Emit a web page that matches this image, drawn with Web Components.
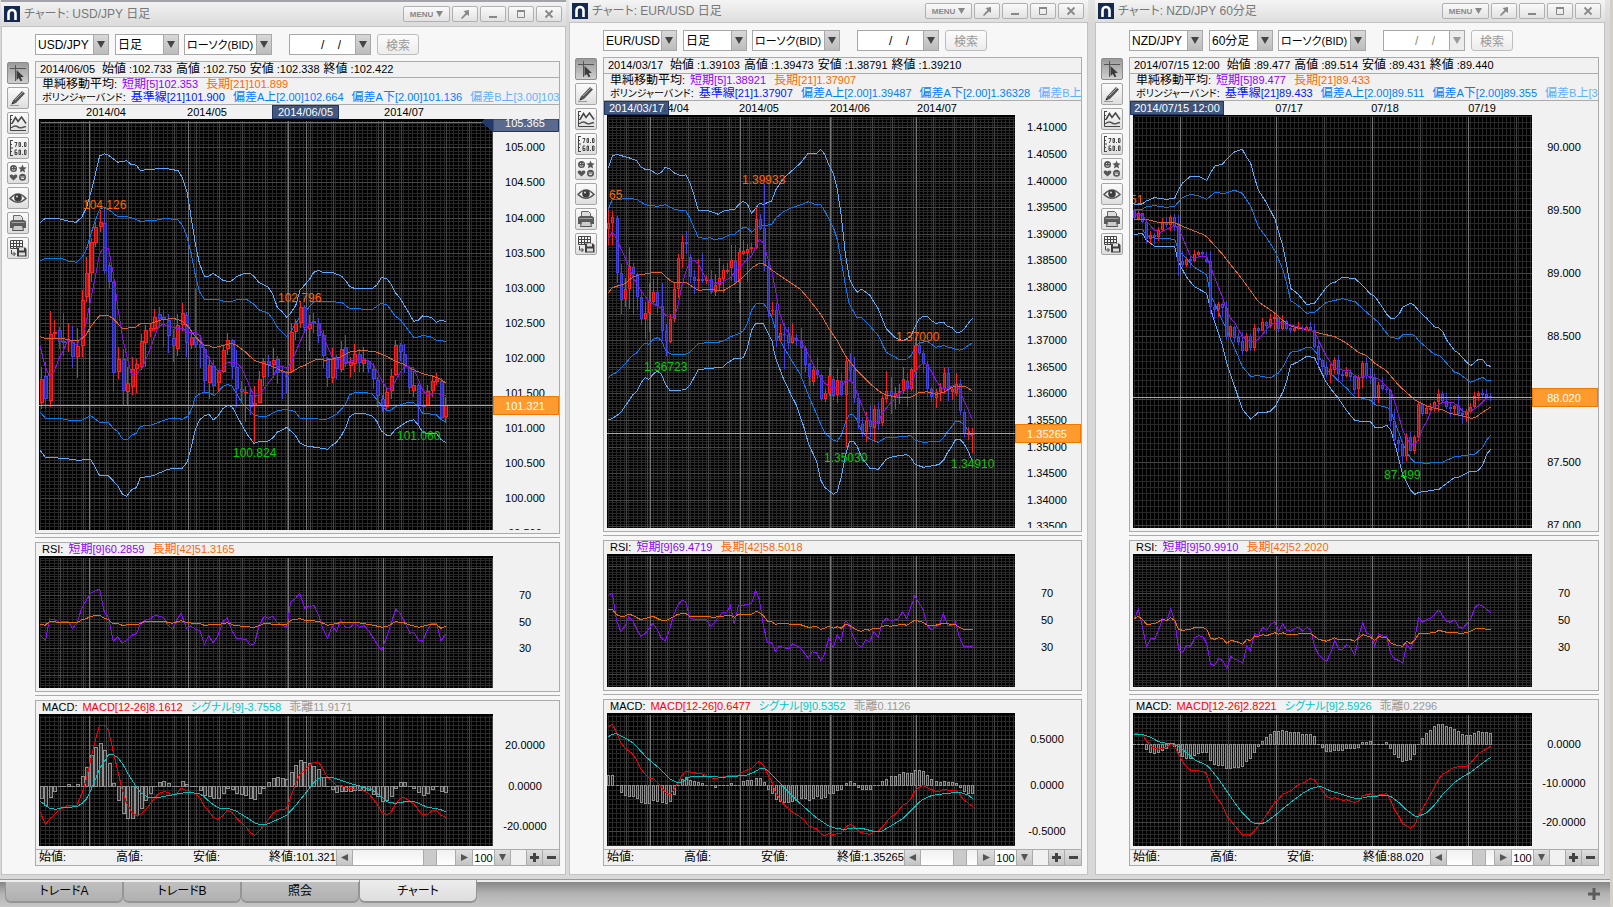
<!DOCTYPE html>
<html lang="ja">
<head>
<meta charset="utf-8">
<title>チャート</title>
<style>
html,body{margin:0;height:100%}
body{font-family:"Liberation Sans","Noto Sans CJK JP",sans-serif;font-size:12px;background:#d4d0c8;color:#000}
</style>
</head>
<body>
<trade-desk></trade-desk>
<script>
/* Series are stored in fine plot units; each chart's s/o pairs turn them into pixels. */
const P = s => s.trim().split(/\s+/).map(p => p.split(',').map(Number));
const CHARTS = {
usd: {
  pair:'USD/JPY', span:'日足', date:'2014/06/05', ohlc:['102.733','102.750','102.338','102.422'],
  ma:['102.353','101.899'], bb:['101.900','102.664','101.136','103.578'], last:'101.321', scroll:80,
  pitch:4.54, body:4, vmid:[88,65.9], vmaj:[170,460,750,1026], cross:800, sx:2.9037,
  dates:[[67,'2014/04'],[168,'2014/05'],[267,'2014/06'],[365,'2014/07']], mark:[233,67],
  main:{ox:-9,oy:-9,y0:112,step:105.3,labels:['105.000','104.500','104.000','103.500','103.000','102.500','102.000','101.500','101.000','100.500','100.000','99.500'],
    hline:886, top:'105.365', x0:31,dx:13.2,
    notes:[[154,297,'104.126','h'],[719,576,'102.796','h'],[588,1041,'100.824','l'],[1066,990,'101.060','l']],
    candles:`r772,808,878,898 b757,799,866,898 r603,672,872,892 r630,666,671,687 b652,659,696,718 b610,692,698,738 r640,692,696,726 b648,695,740,773 r655,708,740,805 r540,571,707,740 r441,490,562,577 r385,397,490,517 r336,352,398,412 r300,336,350,365 b293,340,482,492 b455,465,517,535 b512,516,790,842 r711,748,785,806 b718,748,842,886 r772,820,845,887 r742,778,832,855 r748,762,776,850 r672,693,770,780 r646,660,700,772 r640,654,662,680 r597,622,656,662 b592,613,626,655 b600,622,630,710 b612,630,677,728 b656,685,707,755 r612,645,718,738 r580,609,646,662 b605,615,700,740 r668,682,704,718 b534,682,704,714 b675,703,715,775 b710,716,814,848 r740,765,818,866 b750,767,827,858 r780,787,820,842 r704,720,786,790 r670,690,716,736 b686,690,772,808 b720,772,836,890 b813,836,846,878 r828,846,850,935 b830,855,890,916 r828,880,889,996 r783,808,880,880 r745,754,800,828 b736,752,764,802 r714,750,766,804 b738,748,788,822 b770,782,790,866 b782,794,800,852 r640,667,787,790 r628,640,667,690 r572,592,638,655 b586,592,655,668 r615,642,658,722 b610,632,638,668 b624,638,677,700 b660,676,737,775 b742,745,805,830 r714,748,805,818 b736,748,778,806 r694,717,780,786 b675,711,760,770 r740,757,767,800 r702,732,762,786 b718,732,758,786 r710,750,762,786 b750,754,776,790 b758,776,806,838 b800,810,857,890 b855,866,890,905 r833,847,890,898 r777,797,843,868 r690,706,796,798 b700,706,727,753 b702,732,768,790 b768,770,835,852 r783,826,843,862 b820,824,884,945 b872,885,890,908 r826,843,886,888 r796,814,842,860 r790,808,816,824 b804,814,924,928 r862,886,920,938`,
    lines:[
    ['#5cabfb','29,338 44,325 84,326 105,332 134,337 150,322 165,290 176,250 190,192 202,138 216,131 228,136 255,157 281,152 293,163 309,166 320,181 364,177 400,176 430,182 442,202 456,245 466,310 480,400 492,460 506,498 520,498 532,490 546,500 562,512 582,515 600,500 620,491 640,491 652,500 664,517 692,532 705,553 718,592 732,605 745,622 758,608 772,585 784,541 810,510 824,487 838,481 850,487 880,488 905,499 918,514 928,529 944,536 994,535 1008,525 1020,502 1036,506 1048,522 1060,547 1076,567 1095,600 1114,634 1128,630 1140,618 1165,622 1180,637 1193,631 1207,634'],
    ['#0a78ee','29,452 44,446 97,447 110,453 136,457 152,440 164,418 176,375 190,330 202,298 216,292 230,300 255,320 281,320 300,325 320,334 364,331 395,325 430,330 442,345 456,380 468,430 480,495 492,545 506,568 546,568 560,573 585,575 600,569 630,569 650,583 664,599 692,610 706,628 720,655 745,680 758,665 772,640 784,620 800,604 824,575 850,574 905,577 928,596 994,598 1020,580 1038,586 1060,618 1076,630 1114,682 1128,681 1140,676 1165,681 1180,691 1207,694'],
    ['#0a78ee','29,905 44,924 97,927 120,932 150,931 176,917 202,937 228,938 242,955 255,965 268,986 281,990 296,975 309,970 320,949 352,945 400,927 420,924 442,928 460,918 470,895 480,862 495,850 520,846 534,858 560,830 573,823 586,828 600,850 615,878 635,900 650,914 664,919 690,918 718,902 745,898 770,905 784,925 860,928 890,913 915,885 928,855 944,847 970,847 994,852 1008,870 1022,888 1036,901 1048,901 1062,889 1095,878 1114,878 1128,890 1140,910 1180,914 1193,928 1207,936'],
    ['#5cabfb','29,1020 44,1042 97,1045 140,1051 176,1048 190,1073 202,1097 228,1098 242,1113 255,1127 268,1152 281,1159 296,1138 309,1133 320,1103 358,1097 400,1078 420,1075 440,1077 456,1057 466,1020 480,960 492,930 506,918 520,912 532,930 546,918 560,896 573,886 586,889 600,915 615,945 630,972 650,1000 664,995 692,993 706,983 718,966 732,960 745,952 770,975 784,1000 800,1007 864,1018 878,1005 890,997 905,975 918,950 928,920 944,910 970,910 994,918 1008,935 1020,962 1036,976 1048,975 1062,958 1095,935 1114,929 1128,945 1140,967 1160,972 1180,970 1193,988 1207,998'],
    ['#e0602c','29,680 44,685 97,686 130,693 145,690 163,675 176,650 202,617 228,617 242,626 268,655 305,653 320,641 352,640 380,630 415,625 440,632 460,650 480,680 506,708 520,707 534,713 585,700 600,706 625,725 650,750 664,756 690,764 718,776 745,788 760,786 784,771 800,765 825,751 838,748 860,751 900,741 930,726 965,721 1005,726 1035,739 1060,753 1090,765 1115,780 1140,791 1170,799 1185,804 1207,818'],
    ['#8c10e0','29,706 44,770 57,801 70,785 84,746 97,720 110,690 120,695 135,705 150,680 163,640 176,570 190,500 202,430 216,412 228,416 242,490 256,600 270,690 284,750 295,795 309,792 325,775 340,740 358,690 372,652 385,643 400,648 430,656 442,654 456,667 483,668 495,680 506,720 520,745 534,770 546,782 556,783 572,758 600,758 615,775 630,810 645,845 655,858 668,852 692,820 706,800 720,768 732,768 745,774 758,760 772,725 784,695 800,660 812,640 824,633 838,645 850,675 864,710 878,742 892,744 918,762 930,752 960,745 975,750 994,762 1008,783 1020,810 1036,835 1048,836 1060,815 1076,785 1090,768 1114,774 1128,810 1140,840 1155,856 1180,850 1207,857']]},
  rsi:{ox:-9,oy:-26,y0:195,step:79.7,labels:['70','50','30'],vals:['60.2859','51.3165'],lines:[
    ['#8c08ff','29,316 45,331 57,267 70,268 84,277 110,273 123,296 137,277 150,235 163,212 176,190 190,182 202,178 216,247 228,262 242,334 255,320 268,340 281,331 295,316 309,311 322,278 334,271 348,268 362,256 388,262 400,285 414,299 426,270 439,250 454,295 466,288 480,297 494,303 506,343 519,318 532,338 546,316 560,275 573,263 586,302 600,325 627,328 639,346 652,341 664,290 680,259 692,265 706,259 718,278 745,292 757,217 770,206 783,190 798,234 812,229 825,227 838,255 850,294 864,325 877,290 890,303 902,271 916,292 930,292 942,278 957,292 970,287 983,301 1008,343 1021,362 1036,320 1048,282 1062,238 1075,250 1090,280 1103,310 1114,306 1128,330 1140,334 1154,300 1167,279 1180,279 1193,333 1207,313'],
    ['#f06800','29,283 44,286 57,274 84,277 125,279 137,278 150,269 163,266 176,259 202,256 216,265 228,268 242,282 255,281 268,286 318,282 334,274 388,274 412,280 439,272 456,278 494,281 506,286 530,284 546,284 573,278 590,285 625,290 652,292 680,281 745,284 757,271 783,266 800,271 838,274 864,286 900,278 930,279 945,277 990,284 1022,292 1036,290 1062,275 1085,278 1105,286 1130,292 1160,284 1180,283 1193,295 1207,289']]},
  macd:{ox:-9,oy:-184,y0:646,step:121.5,base:768,labels:['20.0000','0.0000','-20.0000'],vals:['8.1612','-3.7558','11.9171'],x0:31,dx:13.2,lines:[
    ['#f00000','29,846 45,883 60,864 84,840 108,827 135,828 150,792 163,750 176,690 190,630 202,586 216,586 228,600 242,665 255,724 268,780 281,822 296,847 311,859 325,850 342,832 362,804 375,790 388,785 400,787 415,795 428,789 439,774 452,781 466,786 480,790 494,804 506,828 519,843 532,861 546,868 560,857 573,840 586,847 600,865 627,890 639,907 652,916 668,900 692,869 706,850 718,841 745,836 757,800 770,765 783,734 798,721 812,706 825,697 838,697 850,716 864,743 877,752 890,766 905,767 926,776 963,779 983,790 1008,822 1021,846 1036,854 1048,847 1062,822 1076,804 1088,803 1115,822 1128,840 1140,854 1155,853 1167,842 1180,840 1193,856 1207,862'],
    ['#00c0c0','29,813 44,825 57,835 75,838 95,833 135,830 150,821 163,808 176,782 190,748 202,715 216,695 228,674 242,674 255,683 268,700 281,725 296,750 309,771 322,788 340,801 364,804 400,797 439,790 460,787 492,791 506,800 519,813 532,824 550,835 580,837 600,844 627,861 652,878 664,883 690,882 718,869 745,856 770,828 800,790 825,757 838,746 850,742 877,742 905,752 935,762 965,770 994,780 1022,802 1040,817 1062,820 1090,815 1115,815 1128,820 1154,832 1190,838 1207,845']]}
},
eur: {
  pair:'EUR/USD', span:'日足', date:'2014/03/17', ohlc:['1.39103','1.39473','1.38791','1.39210'],
  ma:['1.38921','1.37907'], bb:['1.37907','1.39487','1.36328','1.40277'], last:'1.35265', scroll:75,
  pitch:4.09, body:3, vmid:[79,61.35], vmaj:[151,421,691,949], sx:3,
  dates:[[62,'2014/04'],[152,'2014/05'],[243,'2014/06'],[330,'2014/07']], mark:[-3,65],
  main:{ox:-7,oy:-5,y0:52,step:79.8,labels:['1.41000','1.40500','1.40000','1.39500','1.39000','1.38500','1.38000','1.37500','1.37000','1.36500','1.36000','1.35500','1.35000','1.34500','1.34000','1.33500'],
    hline:970, x0:25,dx:12.27,
    notes:[[28,267,'65','h'],[425,222,'1.39933','h'],[132,783,'1.36723','l'],[889,693,'1.37000','h'],[671,1056,'1.35030','l'],[1052,1074,'1.34910','l']],
    candles:`r297,340,358,406 r303,321,340,406 b318,324,488,518 b462,490,571,613 r505,538,568,592 r410,468,536,598 b458,470,492,616 b488,492,562,600 b540,562,626,646 r577,610,628,686 r520,577,610,665 r507,546,577,582 b500,546,588,608 b520,588,664,692 b643,664,693,738 r613,628,695,700 r515,538,628,635 r433,445,538,565 r375,395,447,475 b363,397,401,433 b433,441,502,518 b480,502,512,551 r448,508,512,543 b428,508,512,520 r495,508,512,522 b480,508,545,552 r493,526,545,557 r445,505,526,542 r465,480,508,550 r458,480,485,492 r405,451,473,512 b405,453,515,520 r413,426,517,580 r390,424,431,434 r402,418,428,515 r398,410,418,430 r292,328,415,418 b312,328,357,360 b222,355,468,482 b455,470,602,620 r575,600,604,615 b580,600,692,712 r643,670,692,697 b640,672,676,776 b652,676,700,718 r640,680,698,702 b672,684,692,708 b655,692,715,795 b708,714,766,785 b758,763,802,828 r765,780,815,828 b742,780,796,808 b792,796,868,872 r838,850,868,875 r772,798,850,857 b798,806,858,870 r778,810,856,880 b790,812,855,858 r742,754,856,1010 b730,754,784,812 b742,780,864,880 b850,864,940,957 b922,943,968,980 r905,934,966,995 b886,932,952,980 r886,898,955,995 b875,898,942,960 r855,865,940,948 r784,842,868,880 b800,842,858,912 r832,850,864,896 r822,842,850,882 r770,808,843,852 b788,814,836,892 r773,778,838,842 r697,706,785,790 b693,706,730,735 b720,730,762,790 b752,762,838,860 b832,838,862,877 r838,846,865,893 r820,830,846,872 r773,788,838,852 b770,788,840,872 r833,838,845,870 r790,822,848,858 b808,822,902,915 b897,906,973,980 r950,970,976,990 r955,970,974,1028`,
    lines:[
    ['#5cabfb','25,175 37,138 49,133 86,143 110,152 122,170 135,178 147,178 172,193 184,187 196,172 209,177 221,188 245,198 257,194 270,220 282,255 295,301 307,303 319,301 331,304 355,313 368,304 392,299 404,298 416,284 430,274 442,282 455,310 467,295 478,280 490,283 515,273 527,240 552,203 576,182 601,160 625,130 650,130 662,118 674,133 686,163 700,190 712,238 724,318 736,430 748,505 760,530 772,547 784,537 809,555 835,597 859,657 884,682 908,693 932,680 944,653 956,628 968,620 982,619 995,632 1007,640 1031,637 1043,650 1055,652 1067,666 1079,667 1091,659 1104,642 1117,625'],
    ['#0a78ee','25,298 37,268 60,268 80,265 110,268 135,284 172,289 197,284 221,297 245,303 257,301 270,325 295,383 319,385 331,383 344,389 368,384 392,373 404,372 430,352 442,354 455,366 478,347 515,344 527,325 552,304 576,293 601,285 625,275 650,285 662,284 674,303 700,352 712,388 724,453 736,525 748,582 772,624 784,622 809,647 835,677 859,727 884,741 896,748 920,747 932,738 944,718 956,700 982,693 1007,712 1031,707 1079,721 1091,716 1117,698'],
    ['#0a78ee','25,802 37,793 49,788 74,763 98,735 110,729 122,712 135,700 147,703 160,688 172,683 184,690 196,720 209,731 221,734 257,733 270,726 295,701 319,698 355,697 368,694 392,680 416,671 430,663 442,640 455,600 467,582 490,580 502,595 515,620 527,660 539,690 564,733 601,793 625,855 650,913 662,943 674,968 700,991 712,994 724,975 736,938 748,913 760,915 772,930 784,962 797,978 809,987 835,997 859,982 884,982 932,977 944,990 968,997 1019,994 1031,982 1043,965 1055,950 1067,934 1079,934 1091,943 1104,960 1117,980'],
    ['#5cabfb','25,929 37,926 62,908 98,855 110,845 122,820 135,803 147,808 160,792 172,783 184,792 196,822 209,841 245,840 257,838 270,825 295,779 331,775 368,772 380,760 404,745 420,747 430,742 442,715 455,660 467,640 490,640 502,665 515,690 527,745 552,810 576,860 589,885 601,920 613,955 625,1000 650,1055 662,1110 674,1132 700,1153 712,1145 724,1100 736,1040 748,995 760,994 772,1010 784,1040 797,1058 809,1075 835,1078 859,1048 871,1042 896,1037 920,1034 932,1042 944,1062 956,1067 970,1072 1007,1066 1019,1062 1031,1050 1043,1027 1055,1010 1067,988 1079,988 1091,1000 1104,1022 1117,1055'],
    ['#e0602c','25,548 37,533 74,521 98,502 122,493 147,491 160,487 184,487 209,511 221,517 257,517 295,541 331,538 368,543 404,522 430,501 455,474 478,460 490,460 515,480 552,505 601,538 625,565 662,613 686,655 712,692 736,737 772,783 809,820 835,842 859,856 896,862 932,862 956,848 982,845 1007,853 1031,847 1055,832 1079,828 1098,831 1117,842'],
    ['#8c10e0','25,386 37,365 49,385 74,440 98,500 122,540 147,575 184,594 196,615 221,625 233,590 245,530 257,485 270,456 282,451 295,461 307,485 319,508 344,520 368,516 392,502 404,487 416,475 442,448 455,438 467,410 478,388 490,398 502,440 515,480 527,545 539,610 552,648 576,683 601,692 625,733 650,785 674,820 698,835 724,832 736,812 748,810 760,822 772,850 785,885 797,915 809,935 821,938 835,937 847,910 871,880 884,868 908,840 932,828 944,795 956,770 970,759 982,763 995,785 1007,810 1025,834 1043,835 1055,828 1067,827 1079,840 1091,870 1104,898 1117,930']]},
  rsi:{ox:-17,oy:-24,y0:190,step:81,labels:['70','50','30'],vals:['69.4719','58.5018'],lines:[
    ['#8c08ff','54,196 67,190 80,273 92,304 104,290 116,262 128,272 140,297 152,319 165,311 189,280 201,298 214,324 226,333 240,294 251,255 263,226 275,211 287,215 299,264 311,268 350,268 361,290 373,278 385,263 397,247 410,247 421,227 433,282 445,227 460,226 485,220 497,181 508,208 520,285 532,338 545,338 556,364 568,349 596,357 608,341 632,355 655,385 667,365 680,369 692,392 703,374 716,325 730,352 742,314 754,333 766,271 778,284 790,320 802,343 815,352 827,330 839,335 851,305 865,322 877,277 889,265 902,273 926,266 938,244 950,266 962,232 974,198 986,218 1000,240 1012,288 1024,300 1048,284 1060,250 1072,286 1084,286 1096,275 1108,320 1120,348 1148,349'],
    ['#f06800','54,238 67,238 80,254 92,259 104,259 116,253 128,256 152,269 189,259 214,271 226,273 240,266 263,253 287,250 299,259 350,259 370,262 421,256 433,262 445,253 485,253 497,245 508,247 520,257 532,273 545,275 556,283 568,281 596,282 632,284 655,292 680,290 692,298 703,295 716,289 730,295 742,290 754,295 766,283 778,286 802,301 815,304 827,298 839,301 851,295 865,297 877,289 889,287 902,289 938,283 950,286 962,278 974,271 1000,277 1012,286 1036,286 1060,280 1096,284 1108,292 1120,298 1148,298']]},
  macd:{ox:-17,oy:-183,y0:628,step:138,base:766,labels:['0.5000','0.0000','-0.5000'],vals:['0.6477','0.5352','0.1126'],x0:55,dx:12.27,lines:[
    ['#f00000','54,590 67,583 80,608 92,637 104,653 128,672 140,690 152,715 165,732 177,744 189,745 201,756 214,770 226,787 240,794 251,780 263,760 275,738 287,724 311,728 340,733 361,742 373,746 397,742 421,735 445,737 456,727 485,715 497,702 508,694 520,705 532,730 545,755 556,785 568,805 580,822 606,845 632,862 643,870 655,887 680,897 692,912 703,917 716,911 730,916 742,910 754,910 766,893 780,882 790,887 802,900 815,908 839,913 851,905 865,903 877,892 900,863 914,855 938,826 950,820 962,807 974,784 986,773 1000,766 1012,773 1036,784 1048,784 1060,778 1072,780 1096,780 1108,790 1120,808 1148,830'],
    ['#00c0c0','54,621 67,613 80,611 104,623 128,638 152,663 165,678 189,699 214,720 240,748 263,758 275,756 299,741 340,738 397,742 445,738 470,735 490,728 508,717 520,715 532,720 556,745 580,770 606,797 632,822 655,842 680,864 716,888 742,896 766,898 790,894 815,895 851,904 877,903 902,888 938,866 962,843 986,818 1000,808 1024,797 1048,793 1072,790 1108,787 1120,790 1135,795 1148,806']]}
},
nzd: {
  pair:'NZD/JPY', span:'60分足', date:'2014/07/15 12:00', ohlc:['89.477','89.514','89.431','89.440'],
  ma:['89.477','89.433'], bb:['89.433','89.511','89.355','89.550'], last:'88.020', scroll:77, off:true,
  pitch:4, body:3, vmid:[22,144], vmaj:[166,454,742,1030], sx:3,
  dates:[[60,'07/16'],[156,'07/17'],[252,'07/18'],[349,'07/19']], mark:[-3,94],
  main:{ox:-8,oy:-5,y0:112,step:188.8,labels:['90.000','89.500','89.000','88.500','88.000','87.500','87.000'],
    hline:862, x0:28,dx:12,
    notes:[[16,282,'51','h'],[776,1106,'87.499','l']],
    candles:`b298,300,325,327 r303,310,327,330 b308,310,337,340 b333,337,388,402 r362,375,388,400 b368,375,382,402 r352,361,380,392 r325,340,361,366 b322,340,346,350 r316,320,346,364 b312,320,349,362 b315,349,452,497 b424,452,465,470 r442,448,465,470 b440,448,452,475 r420,433,452,455 r423,427,434,440 b423,427,432,440 b425,447,455,460 b424,454,590,613 b575,590,599,628 r575,583,600,620 b580,583,594,622 b574,595,680,690 r645,648,680,685 b648,650,683,695 b668,682,695,706 b665,693,724,735 r670,678,724,726 b672,678,713,724 r643,655,713,722 b650,654,662,668 r624,637,662,664 b632,637,648,672 r612,627,647,655 r613,621,627,660 b618,621,656,666 r615,632,656,660 b630,633,656,660 b650,655,660,670 r650,655,664,666 r635,650,656,660 b645,653,658,664 r646,652,661,664 b637,652,660,664 b643,659,710,714 b692,708,751,768 b747,751,771,784 b755,771,795,800 r762,778,795,818 r742,750,780,792 b735,750,793,812 b782,793,797,815 r770,785,797,800 b778,786,800,812 b795,799,839,852 r795,805,838,862 r752,760,803,834 b740,760,799,806 b775,799,804,822 b793,803,864,880 r815,825,864,878 b800,825,838,844 b828,836,841,850 b838,841,934,950 b897,934,990,998 b980,990,1003,1026 b997,1003,1038,1062 r970,981,1038,1052 b966,981,1022,1022 r975,980,1022,1031 r875,881,981,993 b878,881,911,918 r888,893,911,912 r879,893,899,910 r873,877,897,905 r838,853,877,905 b843,852,872,877 b850,872,892,897 b880,891,897,920 r885,889,897,912 b855,888,912,918 b893,910,916,942 r897,905,916,936 r878,891,905,910 r847,858,891,895 r843,850,859,872 b838,850,854,864 b838,852,861,866 b850,858,863,872`,
    lines:[
    ['#5cabfb','28,283 52,282 64,273 88,263 125,268 149,265 160,240 172,220 196,199 222,199 233,205 245,211 257,188 270,168 292,163 310,143 329,125 352,118 364,140 377,160 389,205 400,240 425,280 450,328 462,370 474,410 486,470 497,535 520,553 545,584 569,579 604,532 617,520 630,517 652,502 690,506 712,525 737,553 750,560 773,593 785,613 797,625 809,625 822,613 833,592 857,580 870,588 882,604 905,625 928,650 942,654 953,665 965,690 989,722 1001,730 1025,757 1037,767 1061,747 1073,748 1085,766 1097,769'],
    ['#0a78ee','28,298 52,298 64,290 88,287 125,292 149,289 172,263 196,253 222,258 245,268 270,247 280,247 292,252 329,241 352,250 377,288 400,350 425,383 450,423 474,480 486,525 497,572 520,587 545,610 569,607 604,577 652,566 690,575 725,607 760,637 785,670 797,683 822,685 833,674 857,672 870,678 882,693 928,733 945,737 989,787 1001,790 1037,817 1073,802 1085,811 1097,811'],
    ['#0a78ee','28,358 52,358 64,375 76,383 125,386 149,388 160,420 184,445 208,472 233,487 245,495 257,555 270,583 292,632 310,670 329,715 352,770 377,799 400,797 413,800 437,803 460,790 474,770 497,727 520,723 545,712 560,713 580,735 604,778 640,812 665,835 690,861 712,865 737,871 750,884 785,892 797,900 809,935 833,1000 845,1025 857,1045 870,1057 905,1060 953,1056 989,1040 1050,1033 1073,1012 1085,990 1097,975'],
    ['#5cabfb','28,374 52,370 64,390 88,408 149,411 160,455 184,500 208,530 245,550 257,598 270,640 292,705 305,760 329,830 352,897 377,928 400,907 425,907 437,903 450,890 474,845 486,810 497,766 520,755 545,739 569,743 580,768 604,817 620,840 640,865 665,902 690,932 737,936 750,952 773,952 785,946 797,960 809,1000 822,1050 833,1095 857,1140 870,1153 882,1147 942,1138 965,1120 989,1102 1001,1102 1037,1084 1050,1086 1061,1080 1073,1065 1085,1033 1097,1018'],
    ['#e0602c','28,328 64,328 100,337 149,338 172,349 233,373 245,380 292,432 310,455 352,508 400,575 450,610 474,632 497,648 545,659 590,671 630,680 665,700 700,727 725,737 750,760 785,783 822,827 870,870 905,888 953,900 975,910 1013,918 1037,925 1050,923 1073,907 1097,891'],
    ['#8c10e0','28,313 52,313 64,333 88,360 105,367 125,358 149,347 160,355 172,380 184,410 196,437 208,447 222,440 233,440 245,440 257,470 270,505 292,560 305,605 317,625 329,638 341,660 352,680 365,688 377,695 389,694 400,688 413,672 437,643 462,637 497,645 545,658 569,665 580,690 604,738 617,758 630,775 652,780 675,782 690,797 700,805 712,800 725,797 750,803 762,808 797,843 809,875 822,920 833,962 845,985 857,1003 870,1003 882,985 893,955 905,935 917,905 929,890 953,877 985,878 1001,890 1013,905 1037,904 1061,888 1085,863 1097,862']]},
  rsi:{ox:-13,oy:-24,y0:190,step:81,labels:['70','50','30'],vals:['50.9910','52.2020'],lines:[
    ['#8c08ff','43,268 55,238 67,290 80,350 92,325 104,328 116,298 128,266 140,273 152,236 164,274 176,358 188,367 200,346 212,349 225,322 236,317 249,320 260,341 272,403 284,406 296,385 308,392 320,416 332,379 344,388 356,392 368,400 380,349 391,362 404,311 416,314 428,292 440,301 452,283 464,275 476,304 488,281 500,301 512,304 524,295 536,292 548,304 560,292 572,299 584,350 596,375 608,386 620,394 632,368 644,331 656,358 668,358 680,344 692,352 704,377 716,320 728,278 740,310 752,314 764,349 776,311 788,318 800,320 812,370 824,388 836,391 848,400 860,343 872,358 884,326 896,263 908,277 920,268 932,265 944,254 956,238 968,258 980,274 992,277 1004,268 1016,292 1028,295 1052,268 1064,233 1076,223 1088,229 1100,238 1112,247'],
    ['#f06800','43,266 55,259 67,268 80,283 104,281 128,268 140,272 152,263 164,272 176,298 188,301 212,298 225,292 249,292 260,298 272,325 284,328 296,323 308,326 320,340 332,331 356,337 368,343 380,328 391,332 404,318 416,319 428,314 440,317 464,308 476,313 488,308 500,313 572,311 596,328 620,334 644,323 656,330 692,329 704,334 728,314 752,322 764,331 776,320 800,323 812,338 824,344 848,349 860,334 872,341 884,331 896,311 944,308 956,301 980,307 1028,310 1052,304 1064,297 1080,295 1112,299']]},
  macd:{ox:-13,oy:-183,y0:642,step:117.5,base:642,labels:['0.0000','-10.0000','-20.0000'],vals:['2.8221','2.5926','0.2296'],x0:43,dx:12,lines:[
    ['#f00000','43,611 67,613 80,633 92,647 104,655 116,658 140,652 152,643 164,648 176,675 188,695 200,711 212,721 249,724 260,731 272,768 284,793 308,828 320,857 344,887 368,916 380,913 391,916 404,902 428,870 440,853 464,818 476,808 488,793 512,783 536,763 548,760 560,752 572,745 584,750 596,768 620,799 632,805 644,803 668,811 680,809 704,818 716,813 728,797 752,791 764,797 800,791 812,812 824,840 836,858 848,882 860,887 872,895 884,885 896,855 920,815 944,770 956,748 968,733 980,727 992,718 1004,712 1040,708 1052,700 1064,685 1076,670 1100,656 1112,649'],
    ['#00c0c0','43,613 67,613 92,622 116,635 140,640 164,642 188,658 225,690 260,706 272,718 296,748 320,783 344,818 368,850 391,873 404,880 428,880 440,875 464,857 488,836 524,808 548,790 572,776 600,769 632,783 656,790 680,798 704,805 728,804 752,799 800,797 812,799 836,817 860,840 884,858 896,859 920,848 944,824 968,793 1004,757 1028,740 1052,727 1076,708 1112,682']]}
}};

/* Wraps kanji and kana runs so that they can take their own size beside the digits. */
const mix = s => s.replace(/[\u4e00-\u9fff]+|[\u3040-\u30ff]+/g,
  r => `<span class="${/[\u4e00-\u9fff]/.test(r) ? 'kj' : 'kn'}">${r}</span>`);
const MIXCSS = `.kj{font-size:12px}.kn{font-size:11px;font-feature-settings:"palt"}`;
const at = (pts, x) => {
  for (let i = 1; i < pts.length; i++) if (x <= pts[i][0]) {
    const [a, b] = [pts[i-1], pts[i]];
    return a[1] + (b[1]-a[1]) * (x-a[0]) / (b[0]-a[0]);
  }
  return pts[pts.length-1][1];
};

/* One black plot with its value axis. */
class ChartPlot extends HTMLElement {
  constructor(){ super(); this.attachShadow({mode:'open'}); }
  connectedCallback(){
    const c = CHARTS[this.getAttribute('chart')], kind = this.getAttribute('kind'), d = c[kind];
    const X = x => x / c.sx + d.ox, Y = y => y / 3 + d.oy, R = Math.round;
    const W = 1600, H = 900;
    let minor = '', mid = '', maj = '', out = '';
    for (let i = 0; i * c.pitch < W; i++) minor += `M${R(1 + i*c.pitch)} 1V${H}`;
    for (let k = -90; k < 300; k++) {
      const y = R(Y(d.y0 + k * d.step / 10));
      if (y < 1 || y > H) continue;
      if (k % 10) minor += `M1 ${y}H${W}`; else mid += `M1 ${y}H${W}`;
    }
    const mx = x => R(x / c.sx + c.main.ox);
    for (let k = 0; k < 40; k++) mid += `M${mx(c.vmid[0] + k*c.vmid[1])} 1V${H}`;
    c.vmaj.forEach(x => maj += `M${mx(x)} 1V${H}`);
    if (c.cross) maj += `M${mx(c.cross)} 1V${H}`;
    if (d.top) maj += `M1 3H${W}`;
    out += `<g transform="translate(.5 .5)" fill="none"><path d="${minor}" stroke="#292929"/><path d="${mid}" stroke="#444"/><path d="${maj}" stroke="#757575"/></g>`;
    const lines = d.lines.map(([col, s]) => {
      const p = P(s).map(([x,y]) => X(x).toFixed(1) + ',' + Y(y).toFixed(1)).join(' ');
      return `<polyline points="${p}" stroke="${col}" fill="none"/>`;
    });
    if (d.base) {
      const a = P(d.lines[0][1]), b = P(d.lines[1][1]), y0 = R(Y(d.base));
      for (let i = 0; i < 90; i++) {
        const x = d.x0 + i*d.dx, h = R((at(a,x) - at(b,x)) / 3), px = R(X(x)) - 1;
        const w = c.body - 1;
        if (Math.abs(h) < 2) out += `<path d="M${px} ${y0+.5}h${w+1}" stroke="#909090"/>`;
        else out += `<rect x="${px+.5}" y="${Math.min(y0, y0+h)+.5}" width="${w}" height="${Math.abs(h)}" fill="#2c2c2c" stroke="#909090"/>`;
      }
    }
    if (kind === 'main') {
      out += lines.slice(0,4).join('');
      d.candles.trim().split(/\s+/).forEach((s, i) => {
        const [h,t,b,l] = s.slice(1).split(',').map(v => R(Y(+v))), x = R(X(d.x0 + i*d.dx));
        const [st, fi] = s[0] === 'r' ? ['#ff2020','#b41414'] : ['#4343e6','#2d2dae'];
        out += `<rect x="${x}" y="${h}" width="1" height="${Math.max(1,l-h)}" fill="${st}"/><rect x="${x-1}" y="${t}" width="${c.body}" height="${Math.max(1,b-t)}" fill="${st}"/>`;
        if (b - t > 2) out += `<rect x="${x}" y="${t+1}" width="${c.body-2}" height="${b-t-2}" fill="${fi}"/>`;
      });
      out += lines.slice(4).join('');
      out += `<path d="M0 ${R(Y(d.hline))+.5}H${W}" stroke="#ff9a1e"/>`;
      d.notes.forEach(([x,y,t,k]) => out += `<text x="${R(X(x))}" y="${R(Y(y))}" fill="${k==='h'?'#ff6600':'#00cc00'}">${t}</text>`);
    } else out += lines.join('');
    let ax = '';
    d.labels.forEach((t, i) => ax += `<text x="32" y="${R(Y(d.y0 + i*d.step)) + 4}">${t}</text>`);
    if (d.top) ax += `<path d="M0 0H65.5V12.5H0z" fill="#5a6a8c" stroke="#1f3763"/><text x="32" y="8" fill="#fff">${d.top}</text>`;
    if (d.hline) ax += `<rect x=".5" y="${R(Y(d.hline))-8.5}" width="65" height="18" fill="#ff9a2e" stroke="#f07a00"/><text x="32" y="${R(Y(d.hline))+5}" fill="#fff">${c.last}</text>`;
    this.shadowRoot.innerHTML = `<style>
      :host{display:flex;min-height:0;padding-left:3px}
      .plot{flex:1;min-width:0;height:100%;background:#000;shape-rendering:crispEdges;font-size:12px}
      .axis{width:66px;height:100%;flex:none;font-size:11px;text-anchor:middle}
    </style><svg class="plot" role="img" aria-label="${c.pair} ${kind}">${out}</svg><svg class="axis">${ax}</svg>`;
    if (d.top) {
      const s = this.shadowRoot.querySelector('.plot');
      s.insertAdjacentHTML('beforeend', `<svg x="100%" overflow="visible"><path d="M-12 3L-9 0H0V13z" fill="#223a68"/></svg>`);
    }
  }
}
customElements.define('chart-plot', ChartPlot);

const ICONS = {
  cursor:['十字カーソル','<path d="M3 6.500H19M8.500 3V19" stroke="#555" fill="none"/><path d="M9.500 8v10l2.300-2 1.700 3.300 1.900-.9-1.700-3.200 3.100-.4z" fill="#3c3c3c"/>'],
  pencil:['描画','<path d="M4.500 17.500l1.500-4L15 4l3 2.500-9 9.500z" fill="#555"/><path d="M8 13L16 5" stroke="#aaa"/><path d="M4.500 17.500l1-2.500 1.500 1.300z" fill="#222"/><path d="M3 18.500h9" stroke="#999"/>'],
  wave:['テクニカル','<path d="M3.500 3v15.500H19M3 3.500h3M3 7.500h2M3 11.500h2M3 15.500h2" stroke="#444" fill="none"/><path d="M5 11.500L8.500 5.500l2.500 4 3.500-4.500 4.500 6.500" stroke="#444" fill="none" stroke-width="1.500"/><path d="M5 15.500c3-3 5-1 7 0s4-.5 7-1" stroke="#555" fill="none" stroke-width="1.500"/>'],
  scale:['価格軸','<path d="M3.500 3v16M3 3.500h3M3 7.500h2M3 11h3M3 14.500h2M3 18.500h3" stroke="#444" fill="none"/><path d="M7.500 5.500h2.500L8.500 10M12 5.500h1.500v4h-1.500zM17.500 5.500h1.500v4h-1.500zM15 9.500h1M10 13H8v4.500h2v-2H8M12 13h1.500v4.500h-1.500zM17.500 13h1.500v4.500h-1.500zM15 17.500h1" stroke="#444" fill="none"/>'],
  marks:['マーク','<circle cx="6.500" cy="6.500" r="3.500" fill="#555"/><path d="M4.800 7.500q1.700 1.600 3.400 0M5 5.500h1M7.500 5.500h1" stroke="#ddd" fill="none"/><path d="M15.500 2.500l1.200 2.700 2.900.3-2.200 2 .7 3-2.600-1.600-2.600 1.600.7-3-2.200-2 2.900-.3z" fill="#555"/><path d="M6.500 18.500l-3.500-3.300q-1-2.700 1.300-2.700 1.500 0 2.200 1.200.7-1.200 2.200-1.200 2.300 0 1.300 2.700z" fill="#555"/><circle cx="15.500" cy="15.300" r="3.500" fill="#555"/><path d="M13.500 15h4M14 16.500h3" stroke="#ddd" fill="none"/>'],
  eye:['表示','<path d="M3 11.500q8-9 16 0-8 7.500-16 0z" fill="#f4f4f4" stroke="#555" stroke-width="1.500"/><circle cx="11" cy="10.800" r="3.800" fill="#3c3c3c"/><circle cx="10" cy="9.600" r="1" fill="#ddd"/>'],
  print:['印刷','<path d="M6.500 9V3.500h7l2 2V9" fill="#ddd" stroke="#666"/><path d="M3 9.500l2-1.500h12l2 1.500V16H3z" fill="#5c5c5c"/><path d="M4.500 10.500h13" stroke="#a0a0a0"/><path d="M6.500 13.500h9l1 5h-11z" fill="#ccc" stroke="#555"/>'],
  save:['保存','<path d="M3.500 3.500h12v8h-12zM3.500 6.500h12M3.500 9.500h12M6.500 3.500v8M9.500 3.500v8M12.500 3.500v8" fill="none" stroke="#444"/><path d="M4.500 13v4H8M6.500 15l2 2-2 2" fill="none" stroke="#444"/><path d="M10 10.500h8l1.500 1.500v7.500H10z" fill="#3c3c3c"/><path d="M12 10.500h5v3h-5zM12 15.500h6v3h-6z" fill="#ddd"/>']
};
class ToolColumn extends HTMLElement {
  constructor(){
    super();
    this.attachShadow({mode:'open'}).innerHTML = `<style>
      :host{display:flex;flex-direction:column;gap:3px;padding-top:1px}
      button{width:22px;height:22px;padding:0;border:1px solid #a6a6a6;border-radius:2px;background:linear-gradient(#fbfbfb,#dedede);display:block}
      button:first-of-type{background:linear-gradient(#9a9a9a,#cfcfcf);border-color:#8c8c8c}
      svg{display:block;width:22px;height:22px;margin:-1px}
    </style>` + Object.values(ICONS).map(([n,s]) => `<button type="button" aria-label="${n}"><svg viewBox="0 0 22 22">${s}</svg></button>`).join('');
  }
}
customElements.define('tool-column', ToolColumn);

class TitleBar extends HTMLElement {
  constructor(){
    super();
    this.attachShadow({mode:'open'}).innerHTML = `<style>
      :host{display:flex;align-items:center;gap:4px;padding:0 4px 0 3px;color:#777;font-size:12px;font-feature-settings:"palt"}
      h2{font:inherit;margin:0;flex:1;white-space:nowrap;line-height:16px}
      .logo{width:16px;height:16px;flex:none}
      .btns{display:flex;gap:2px}
      button{width:26px;height:16px;box-sizing:border-box;padding:0;border:1px solid #b0b0b0;border-radius:2px;background:linear-gradient(#fafafa,#e2e2e2);color:#888;display:flex;align-items:center;justify-content:center;gap:3px;font:bold 8px "Liberation Sans",sans-serif}
      button.menu{width:47px}
      button svg{width:12px;height:12px}
      button .down{width:7px;height:6px}
    </style>
    <svg class="logo" viewBox="0 0 16 16"><rect width="16" height="16" fill="#142850"/><path d="M4.500 14V7.500a3.500 3.500 0 0 1 7 0V14" fill="none" stroke="#fff" stroke-width="2.600"/></svg>
    <h2><slot></slot></h2>
    <div class="btns"><button class="menu" type="button">MENU<svg class="down" viewBox="0 0 7 6"><path d="M0 0h7L3.500 6z" fill="#888"/></svg></button>
    <button type="button" aria-label="切り離し"><svg viewBox="0 0 12 12"><path d="M10 2v6L8 6.500 3 11l-1-1 4.500-5L4.500 3z" fill="#888"/></svg></button>
    <button type="button" aria-label="最小化"><svg viewBox="0 0 12 12"><path d="M2 8h8v2H2z" fill="#888"/></svg></button>
    <button type="button" aria-label="最大化"><svg viewBox="0 0 12 12"><path d="M2.500 3h7v6.500h-7z" fill="none" stroke="#888"/><path d="M2 2h8v2H2z" fill="#888"/></svg></button>
    <button type="button" aria-label="閉じる"><svg viewBox="0 0 12 12"><path d="M2.500 2.500l7 7M9.500 2.500l-7 7" stroke="#888" stroke-width="1.800"/></svg></button></div>`;
  }
}
customElements.define('title-bar', TitleBar);

class SearchBar extends HTMLElement {
  constructor(){ super(); this.attachShadow({mode:'open'}); }
  connectedCallback(){
    const c = CHARTS[this.getAttribute('chart')], off = c.off ? 'disabled' : '';
    const arrow = '<i class="arr"></i>';
    const sel = (w, n, t) => `<span class="box ${w}"><select aria-label="${n}"><option>${t}</option></select>${arrow}</span>`;
    this.shadowRoot.innerHTML = `<style>
      :host{display:flex;height:21px;font-size:12px;font-feature-settings:"palt"}
      .box{display:flex;box-sizing:border-box;border:1px solid #a8a8a8;background:#fff;margin-right:6px}
      .a{width:74px}.b{width:64px;margin-right:5px}.c{width:88px;margin-right:17px}.d{width:82px}
      select,input{appearance:none;border:0;border-radius:0;background:none;margin:0;padding:0 0 0 2px;flex:1;min-width:0;width:100%;font:inherit;font-feature-settings:"palt";color:#000;outline:0}
      .c select{font-size:11px}
      input{text-align:right;padding-right:14px}
      input:disabled{color:#888}
      .arr{width:14px;flex:none;border-left:1px solid #a8a8a8;background:linear-gradient(#d8d8d8,#bcbcbc);display:grid;place-items:center;pointer-events:none}
      .arr::after{content:"";border:4px solid transparent;border-top:7px solid #444;border-bottom:0}
      .off .arr{background:#ececec}.off .arr::after{border-top-color:#999}
      button{width:42px;padding:0;border:1px solid #bdbdbd;border-radius:3px;background:linear-gradient(#fcfcfc,#ececec);color:#999;font:inherit}
    </style>${sel('a','通貨ペア',c.pair)}${sel('b','足種',c.span)}${sel('c','チャート種類','ローソク(BID)')}
    <span class="box d ${off && 'off'}"><input aria-label="日付" value="/    /" ${off}>${arrow}</span><button type="button">検索</button>`;
  }
}
customElements.define('search-bar', SearchBar);

class PriceFooter extends HTMLElement {
  constructor(){ super(); this.attachShadow({mode:'open'}); }
  connectedCallback(){
    const c = CHARTS[this.getAttribute('chart')];
    this.shadowRoot.innerHTML = `<style>${MIXCSS}
      :host{display:flex;height:15px;line-height:15px;font-size:11px;border-top:1px solid #ababab}
      .vals{display:grid;grid-template-columns:77px 77px 76px 1fr;width:297px;padding-left:3px;flex:none;white-space:nowrap}
      button{width:16px;height:15px;padding:0;border:0;border-left:1px solid #ababab;background:linear-gradient(#dedede,#c4c4c4);flex:none;display:grid;place-items:center}
      button:last-child{width:17px}
      svg{width:11px;height:11px;display:block}
      .scroll{flex:1;display:flex;min-width:0}
      input[type=range]{appearance:none;flex:1;min-width:0;margin:0;height:15px;background:linear-gradient(#f0f0f0,#fff);border-left:1px solid #ababab}
      input[type=range]::-webkit-slider-thumb{appearance:none;width:14px;height:15px;background:#cacaca;border:0 solid #ababab;border-width:0 1px}
      .num{width:22px;padding:0;border:0;border-left:1px solid #ababab;background:#fff;font:11px "Liberation Sans",sans-serif;text-align:center;height:15px;box-sizing:border-box}
      .gap{width:15px;border-left:1px solid #ababab}
    </style><div class="vals"><span>${mix('始値:')}</span><span>${mix('高値:')}</span><span>${mix('安値:')}</span><span>${mix('終値:'+c.last)}</span></div>
    <div class="scroll"><button type="button" aria-label="左へ"><svg viewBox="0 0 11 11"><path d="M9 2v7L2 5.500z" fill="#555"/></svg></button><input type="range" aria-label="位置" value="${c.scroll}"><button type="button" aria-label="右へ"><svg viewBox="0 0 11 11"><path d="M2 2v7l7-3.500z" fill="#555"/></svg></button></div>
    <input class="num" aria-label="本数" value="100"><button type="button" aria-label="本数を選ぶ"><svg viewBox="0 0 11 11"><path d="M2 2h7L5.500 9z" fill="#555"/></svg></button><span class="gap"></span><button type="button" aria-label="拡大"><svg viewBox="0 0 11 11"><path d="M4 1h3v3h3v3H7v3H4V7H1V4h3z" fill="#444"/></svg></button><button type="button" aria-label="縮小"><svg viewBox="0 0 11 11"><path d="M1 4h9v3H1z" fill="#444"/></svg></button>`;
  }
}
customElements.define('price-footer', PriceFooter);

class ChartWindow extends HTMLElement {
  constructor(){ super(); this.attachShadow({mode:'open'}); }
  connectedCallback(){
    const id = this.getAttribute('chart'), c = CHARTS[id];
    const it = (cls, t) => `<span class="${cls}">${mix(t)}</span>`;
    const dates = c.dates.map(([x,t]) => `<span style="left:${x}px">${t}</span>`).join('');
    this.shadowRoot.innerHTML = `<style>${MIXCSS}
      :host{display:flex;flex-direction:column;min-width:0;min-height:0;background:linear-gradient(#f4f4f4,#dcdcdc 24px);--top:22px;--sub:133px}
      :host([tall]){--top:26px;--sub:132px}
      title-bar{height:var(--top);flex:none}
      :host([tall]) title-bar{border-top:2px solid #a2a2aa;box-sizing:border-box}
      .body{flex:1;min-height:0;display:flex;flex-direction:column;gap:6px;padding:7px 5px 8px;border:1px solid #c2c2c2;background:#f7f7f7}
      search-bar{margin-left:28px}
      .work{flex:1;min-height:0;display:flex;gap:6px}
      .panels{flex:1;min-width:0;display:flex;flex-direction:column}
      section{border:1px solid #ababab;background:#f1f1f1;display:flex;flex-direction:column;min-height:0;overflow:hidden}
      .price{flex:1}
      hr{width:100%;height:1px;margin:3px 0 4px;border:0;background:#ababab;flex:none}
      .row{display:flex;gap:8px;height:13px;line-height:13px;font-size:11px;white-space:nowrap;overflow:hidden;padding-left:6px;flex:none}
      .lead{margin-right:-3px}
      .quote{gap:4px;border-bottom:1px solid #ababab;padding-left:4px;height:15px;line-height:15px}
      .quote :first-child{margin-right:3px}
      .bands{border-bottom:1px solid #ababab}
      .bands .kn{font-size:10px}
      .dates{position:relative;height:14px;line-height:14px;font-size:11px;flex:none;margin-left:3px;margin-right:66px}
      .dates span{position:absolute;transform:translateX(-50%)}
      .dates b{position:absolute;top:0;box-sizing:border-box;height:14px;line-height:13px;text-align:center;font-weight:normal;color:#fff;background:rgba(53,76,118,.93);border:1px solid #1f3763;white-space:nowrap}
      .price chart-plot{flex:1;margin-bottom:3px;height:0}
      .sub chart-plot{height:var(--sub);margin-bottom:3px}
      .p{color:#9000ff}.o{color:#ff6600}.bl{color:#0018ff}.az{color:#0080ff}.lz{color:#62b0ff}.rd{color:#f00}.cy{color:#00c8c8}.gy{color:#999}
    </style>
    <title-bar>チャート: ${c.pair} ${c.span}</title-bar>
    <div class="body"><search-bar chart="${id}"></search-bar>
    <div class="work"><tool-column></tool-column><div class="panels">
      <section class="price">
        <div class="row quote"><span>${c.date}</span>${['始値','高値','安値','終値'].map((n,i) => it('', n+':'+c.ohlc[i])).join('')}</div>
        <div class="row">${it('lead','単純移動平均:')}${it('p','短期[5]'+c.ma[0])}${it('o','長期[21]'+c.ma[1])}</div>
        <div class="row bands">${it('lead','ボリンジャーバンド:')}${it('bl','基準線[21]'+c.bb[0])}${it('az','偏差A上[2.00]'+c.bb[1])}${it('az','偏差A下[2.00]'+c.bb[2])}${it('lz','偏差B上[3.00]'+c.bb[3])}</div>
        <div class="dates">${dates}<b style="left:${c.mark[0]}px;width:${c.mark[1]}px">${c.date}</b></div>
        <chart-plot chart="${id}" kind="main"></chart-plot>
      </section><hr>
      <section class="sub"><div class="row">${it('lead','RSI:')}${it('p','短期[9]'+c.rsi.vals[0])}${it('o','長期[42]'+c.rsi.vals[1])}</div><chart-plot chart="${id}" kind="rsi"></chart-plot></section><hr>
      <section class="sub"><div class="row">${it('lead','MACD:')}${it('rd','MACD[12-26]'+c.macd.vals[0])}${it('cy','シグナル[9]'+c.macd.vals[1])}${it('gy','乖離'+c.macd.vals[2])}</div><chart-plot chart="${id}" kind="macd"></chart-plot><price-footer chart="${id}"></price-footer></section>
    </div></div></div>`;
  }
}
customElements.define('chart-window', ChartWindow);

class TabStrip extends HTMLElement {
  constructor(){
    super();
    this.attachShadow({mode:'open'}).innerHTML = `<style>
      :host{display:flex;height:25px;padding:0 10px 0 6px;background:linear-gradient(#868686,#b4b4b4 12px,#c6c6c6);border-top:2px solid #ededed;align-items:flex-start}
      nav{display:flex;flex:1;gap:2px}
      a{width:116px;height:19px;line-height:18px;text-align:center;color:#000;text-decoration:none;font-size:12px;font-feature-settings:"palt";border-radius:0 0 5px 5px;background:linear-gradient(#c0c0c0,#b0b0b0);box-shadow:0 1px 0 1px #959595;white-space:nowrap}
      a[aria-current]{background:linear-gradient(#ededed,#dedede);margin-top:-2px;height:21px;line-height:22px}
      button{border:0;background:none;padding:0;margin-top:6px}
      svg{display:block;width:12px;height:12px}
    </style><nav><a href="#a">トレードA</a><a href="#b">トレードB</a><a href="#c">照会</a><a href="#d" aria-current="page">チャート</a></nav>
    <button type="button" aria-label="タブを追加"><svg viewBox="0 0 12 12"><path d="M4.500 0h3v4.500H12v3H7.500V12h-3V7.500H0v-3h4.500z" fill="#5c5c5c"/></svg></button>`;
  }
}
customElements.define('tab-strip', TabStrip);

class TradeDesk extends HTMLElement {
  constructor(){
    super();
    this.attachShadow({mode:'open'}).innerHTML = `<style>
      :host{display:flex;flex-direction:column;min-height:100vh;margin-right:3px;overflow:hidden}
      main{flex:1;display:grid;grid-template-columns:565fr 523fr 514fr;gap:3px;padding:0 1px;border-bottom:1px solid #999;background:linear-gradient(#e4e4e4,#d8d8d8 24px);min-height:0}
      chart-window{margin:0 4px 4px 0}
      chart-window[tall]{margin-right:0}
    </style><main><chart-window chart="usd" tall></chart-window><chart-window chart="eur"></chart-window><chart-window chart="nzd"></chart-window></main><tab-strip></tab-strip>`;
  }
}
customElements.define('trade-desk', TradeDesk);
</script>
</body>
</html>
